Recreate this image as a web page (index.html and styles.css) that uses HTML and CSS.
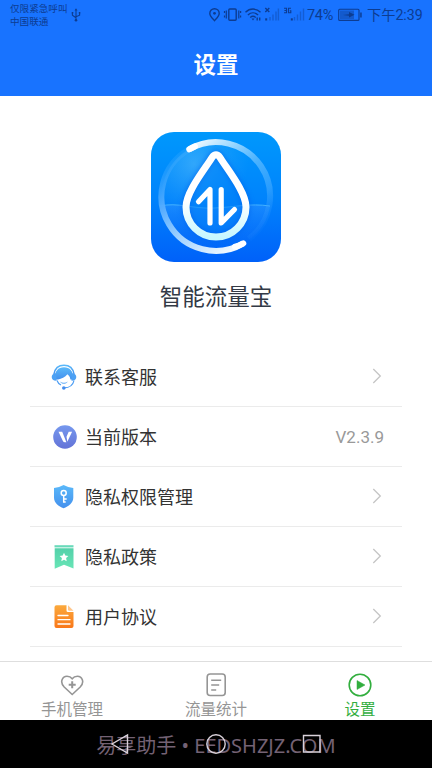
FILE: index.html
```html
<!DOCTYPE html>
<html lang="zh-CN">
<head>
<meta charset="utf-8">
<title>设置</title>
<link rel="stylesheet" href="styles.css">
</head>
<body>
<div class="screen">
  <header class="header">
    <div class="status">
      <div class="carrier"><span>仅限紧急呼叫</span><span>中国联通</span></div>
      <svg class="usb" width="10" height="14" viewBox="0 0 10 14" fill="none" stroke="currentColor" stroke-width="1.1"><path d="M5 2v10M1.4 5v2.2L5 9.7M8.6 4.8v2.4L5 8.8"/><path d="M3.5 2.5 5 .3l1.5 2.2zM.7 4h1.6v1.5H.7zM7.8 4h1.5v1.5H7.8z" fill="currentColor" stroke="none"/><circle cx="5" cy="12.3" r="1.3" fill="currentColor" stroke="none"/></svg>
      <svg class="status-icons" width="98" height="18" viewBox="208 6 98 18" fill="none" stroke="currentColor" stroke-width="1.4">
        <path d="M214.5 20.6c-1.2-1.6-4.7-4.2-4.7-7.2a4.7 4.7 0 0 1 9.4 0c0 3-3.5 5.6-4.7 7.2z"/><circle cx="214.5" cy="13.3" r="1.4" fill="currentColor" stroke="none"/>
        <rect x="228.8" y="9" width="7.4" height="11.3" rx="1"/><path d="M226.3 10.5v8M238.8 10.5v8M224.5 11v2M224.5 15.5v2M240.6 11v2M240.6 15.5v2" stroke-width="1.2"/>
        <path d="M245.5 12.2c4.4-4.2 10.6-4.2 15 0M247.9 15c3-2.8 7.2-2.8 10.2 0M250.2 17.5c1.7-1.5 3.9-1.5 5.6 0"/><path d="M251.5 18.6h3L253 20.5zM256.5 17.5h1.4v3h-1.4zM259 17.5h1.4v3H259z" fill="currentColor" stroke="none"/>
        <path d="m265.3 8 4 4m0-4-4 4"/><path d="M266.2 18.3v2.2" stroke-width="2"/>
        <path d="M270 17v3.5M273 14.5v6M276 11.5v9M278.4 8.5v12M294.5 17v3.5M297.5 14.5v6M300.5 11.5v9M303.5 8.5v12" opacity=".4"/><path d="M291.8 18.3v2.2" stroke-width="2"/>
        <path d="M284 8.3h2.5v4.4H284m.4-2.2h2M291 8.3h-2.5v4.4h2.3v-2h-1" stroke-width="1.1"/>
      </svg>
      <span class="percent">74%</span>
      <svg class="battery" width="24" height="14" viewBox="0 0 24 14"><rect x=".7" y="1.2" width="20.3" height="11.2" rx="1" fill="none" stroke="currentColor" stroke-width="1.1"/><path d="M2 2.5h14v8.6H2z" fill="currentColor" opacity=".45"/><path d="m5 7 6-.8V4l5.5 2.7L11 9.4V7.7z" fill="currentColor"/><path d="M22.2 4.5h1.5v5h-1.5z" fill="currentColor"/></svg>
      <span class="time">下午2:39</span>
    </div>
    <h1 class="title">设置</h1>
  </header>
  <main class="content">
    <svg class="logo" viewBox="0 0 130 130">
      <defs>
        <linearGradient id="bg" x2="0" y2="1"><stop stop-color="#0098fc"/><stop offset=".5" stop-color="#0084fc"/><stop offset="1" stop-color="#0061f9"/></linearGradient>
        <linearGradient id="arcR" gradientUnits="userSpaceOnUse" x1="38" y1="10" x2="112" y2="100"><stop stop-color="#fff"/><stop offset=".25" stop-color="#9cd8ff"/><stop offset=".5" stop-color="#5ab9ff" stop-opacity=".8"/><stop offset=".75" stop-color="#4aaeff" stop-opacity=".55"/><stop offset="1" stop-color="#2591ff" stop-opacity=".05"/></linearGradient>
        <linearGradient id="arcL" gradientUnits="userSpaceOnUse" x1="92" y1="118" x2="20" y2="25"><stop stop-color="#fff"/><stop offset=".4" stop-color="#a5d4ff"/><stop offset=".7" stop-color="#55acff"/><stop offset="1" stop-color="#42adff" stop-opacity=".2"/></linearGradient>
        <radialGradient id="sheen" cx=".3" cy=".2" r=".5"><stop stop-color="#62bffa" stop-opacity=".5"/><stop offset="1" stop-color="#42adfc" stop-opacity="0"/></radialGradient>
        <linearGradient id="drop" x2="0" y2="1"><stop stop-color="#fff"/><stop offset=".55" stop-color="#fff"/><stop offset="1" stop-color="#c7f7ff"/></linearGradient>
        <linearGradient id="water" x2="0" y2="1"><stop stop-color="#248fff" stop-opacity=".65"/><stop offset="1" stop-color="#0865f8" stop-opacity=".2"/></linearGradient>
        <filter id="glow" x="-20%" y="-20%" width="140%" height="140%"><feGaussianBlur stdDeviation="2"/></filter>
      </defs>
      <rect width="130" height="130" rx="23" fill="url(#bg)"/>
      <circle cx="64.7" cy="64.2" r="54" fill="url(#sheen)"/>
      <path d="M9 74c18-4 32 3 54 2 23-1 35-5 56-2-4 25-25 44-54 44S13 100 9 74z" fill="url(#water)"/>
      <path d="M9 74c18-4 32 3 54 2 23-1 35-5 56-2" fill="none" stroke="#50bdff" stroke-width=".8"/>
      <path d="M38.3 17.3A54 54 0 0 1 98 107" fill="none" stroke="url(#arcR)" stroke-width="6"/>
      <path d="M92.3 111.3A54 54 0 0 1 37 18" fill="none" stroke="url(#arcL)" stroke-width="6"/>
      <path d="M38.3 17.3Q41 15.6 44 14.4M92.3 111.3Q88 114 84 114.8" fill="none" stroke="#fff" stroke-width="6" stroke-linecap="round"/>
      <path d="M61 25.500Q65 20 69 25.500C76 37 95 60 95 75a30 30 0 0 1-60 0C35 60 54 37 61 25.500z" fill="#0482fa" stroke="#0564ee" stroke-width="10" filter="url(#glow)" opacity=".5"/>
      <path d="M61 25.500Q65 20 69 25.500C76 37 95 60 95 75a30 30 0 0 1-60 0C35 60 54 37 61 25.500z" fill="none" stroke="url(#drop)" stroke-width="7"/>
      <path d="M47.500 69.700 59 57.500V91M70.200 57.500V91L83.500 77.500" fill="none" stroke="#fff" stroke-width="5.200" stroke-linecap="round" stroke-linejoin="round"/>
    </svg>
    <p class="app-name">智能流量宝</p>
    <ul class="list">
      <li class="row">
        <svg class="icon" viewBox="0 0 26 26"><defs><linearGradient id="blue" x2="0" y2="1"><stop stop-color="#5ab9fa"/><stop offset="1" stop-color="#4490ed"/></linearGradient></defs><path d="M3 10C4 4 8 1.200 13 1.200S22 4 23 10" fill="none" stroke="url(#blue)" stroke-width="1.500"/><path d="M4.200 15.500C3 7 7.500 3.300 13 3.300s10 3.700 8.800 12.200l-2.400-.1c-.5-2.600-1.500-4-3-5.100-2.300 3.200-6 4.200-9.300 5.200z" fill="url(#blue)"/><path d="M5.500 9.300v7.400c-3 .1-4.800-1.200-4.800-3.700 0-2.300 1.800-3.800 4.800-3.700zM20.500 9.300v7.400c3 .1 4.800-1.200 4.800-3.700 0-2.300-1.800-3.800-4.800-3.700z" fill="#4da1f4"/><path d="M6 16.500c.7 2 2 3.600 4 4.500M23 16.500c-1 4.700-5 7.300-10 7.400" fill="none" stroke="#4b9cf3" stroke-width="1.200"/><path d="M9 17.500c2.400 1.700 5.400 1.700 7.800 0-1.600 3-6.200 3.200-7.800 0z" fill="#65aef6"/><circle cx="12.800" cy="24" r="1.800" fill="#438ced"/></svg>
        <span class="label">联系客服</span><svg class="chevron" viewBox="0 0 10 16"><path d="m1.300 1 7 7-7 7"/></svg>
      </li>
      <li class="row">
        <svg class="icon" viewBox="0 0 26 26"><defs><linearGradient id="violet" x2="0" y2="1"><stop stop-color="#7598ee"/><stop offset="1" stop-color="#6473d7"/></linearGradient></defs><circle cx="14" cy="13" r="11.800" fill="url(#violet)"/><path d="M7.500 7.800h3.700l4.200 10.400h-1.600q-1.300 0-1.900-1.200zM15.500 12.800l2.200-5h3.400l-4.800 10z" fill="#fff"/></svg>
        <span class="label">当前版本</span><span class="version">V2.3.9</span>
      </li>
      <li class="row">
        <svg class="icon" viewBox="0 0 26 26"><path d="M12.600 1Q17 3.500 22.300 4v9.500c0 5.400-4.700 8.800-9.700 10.700C7.600 22.300 3 18.900 3 13.500V4q5.300-.5 9.600-3z" fill="url(#blue)"/><circle cx="12.700" cy="9" r="2.500" fill="none" stroke="#fff" stroke-width="1.500"/><path d="M12.700 11.500v7.200M12.700 15h3M12.700 18h2" fill="none" stroke="#fff" stroke-width="1.500"/></svg>
        <span class="label">隐私权限管理</span><svg class="chevron" viewBox="0 0 10 16"><path d="m1.300 1 7 7-7 7"/></svg>
      </li>
      <li class="row">
        <svg class="icon" viewBox="0 0 26 26"><defs><linearGradient id="green" x2="0" y2="1"><stop stop-color="#54d1aa"/><stop offset="1" stop-color="#68e5b6"/></linearGradient></defs><path d="M3.500 1.200h19v2.200h-19z" fill="#69daba"/><path d="M3.700 4.300h18.800v20.300L13 20.700l-9.300 4z" fill="url(#green)"/><path d="m13 8.800 1.300 2.800 3.100.4-2.300 2.100.6 3.100-2.700-1.500-2.700 1.500.6-3.100L8.600 12l3.100-.4z" fill="#fff"/></svg>
        <span class="label">隐私政策</span><svg class="chevron" viewBox="0 0 10 16"><path d="m1.300 1 7 7-7 7"/></svg>
      </li>
      <li class="row">
        <svg class="icon" viewBox="0 0 26 26"><defs><linearGradient id="orange" x2="0" y2="1"><stop stop-color="#fbaa3d"/><stop offset="1" stop-color="#f97719"/></linearGradient></defs><path d="M5.500 1.200h10v5.300q0 1.500 1.500 1.500h5.500v14q0 2-2 2h-15q-2 0-2-2V3.200q0-2 2-2z" fill="url(#orange)"/><path d="m17 1.200 5.500 5.600h-4.300q-1.200 0-1.200-1.200z" fill="#ffc68b"/><path d="M7 11.500h10M7 15.700h12M7 20h12" stroke="#fff" stroke-width="1.300" stroke-linecap="round"/></svg>
        <span class="label">用户协议</span><svg class="chevron" viewBox="0 0 10 16"><path d="m1.300 1 7 7-7 7"/></svg>
      </li>
    </ul>
  </main>
  <nav class="tabs">
    <div class="tab"><svg viewBox="0 0 24 24"><path d="M12.200 21.500 4.200 14C-.7 8.900 2.500 3.200 7 3.200c2.300 0 4 .9 5.200 2.500 1.200-1.600 2.900-2.500 5.200-2.500 4.500 0 7.700 5.700 2.800 10.800z"/><path d="M12.200 8.300v7M8.700 11.800h7" stroke-width="2"/></svg><span>手机管理</span></div>
    <div class="tab"><svg viewBox="0 0 24 24"><rect x="3.200" y="1" width="18" height="21.500" rx="3"/><path d="M7.200 7.200h10M7.200 12h8M7.200 17h5"/></svg><span>流量统计</span></div>
    <div class="tab active"><svg viewBox="0 0 24 24"><circle cx="12" cy="12" r="10.800"/><path d="M9 7.500v9l8-4.500z" fill="currentColor" stroke-width=".5"/></svg><span>设置</span></div>
  </nav>
  <footer class="system">
    <p class="watermark">易享助手 • EEDSHZJZ.COM</p>
    <svg class="nav-icons" viewBox="0 0 432 48"><path d="M127.500 15v18L112 24zM303.500 15.500h16.500v16.500h-16.500z"/><circle cx="216" cy="24" r="9.200"/></svg>
  </footer>
</div>
</body>
</html>
```

FILE: styles.css
```css
* { box-sizing: border-box; }

body {
  margin: 0;
  background: #fff;
  font-family: Roboto, "Noto Sans CJK SC", sans-serif;
}

.screen {
  width: 432px;
  height: 768px;
  display: flex;
  flex-direction: column;
  overflow: hidden;
}

svg { display: block; flex: none; }

.header { height: 96px; background: #1873ff; }

.status {
  height: 30px;
  padding: 0 9px 0 10px;
  display: flex;
  align-items: center;
  color: #0d3c91;
  white-space: nowrap;
}

.carrier {
  display: flex;
  flex-direction: column;
  width: 58px;
  font-size: 9.6px;
  line-height: 13px;
}

.usb { margin-left: 3px; }
.status-icons { margin-left: 127px; }
.percent { margin-left: 1px; width: 30px; font-size: 14.5px; letter-spacing: -.3px; }
.battery { margin-left: 1px; }
.time { margin-left: 5px; font-size: 14.2px; line-height: 18px; padding-bottom: 1px; }

.title {
  margin: 0;
  height: 66px;
  color: #fff;
  font-size: 22.5px;
  line-height: 70px;
  font-weight: 700;
  text-align: center;
}

.content {
  height: 565px;
  display: flex;
  flex-direction: column;
  align-items: center;
  padding-top: 36px;
}

.logo { width: 130px; height: 130px; }

.app-name {
  margin: 18px 0 33px;
  font-size: 22.5px;
  line-height: 34px;
  color: #333a46;
}

.list {
  margin: 0;
  padding: 0;
  width: 372px;
  list-style: none;
}

.row {
  height: 60px;
  display: flex;
  align-items: center;
  padding: 0 18px 0 21px;
  border-bottom: 1px solid #ebebeb;
}

.icon { width: 26px; height: 26px; }

.label {
  flex: 1;
  margin-left: 8px;
  padding-top: 2px;
  font-size: 18px;
  line-height: 28px;
  color: #333;
}

.chevron {
  width: 10px;
  height: 16px;
  margin: 0 2.5px .5px 0;
  fill: none;
  stroke: #c5c5c5;
  stroke-width: 1.3;
}

.version { font-size: 17px; color: #999; }

.tabs {
  height: 59px;
  display: flex;
  border-top: 1px solid #dedede;
  background: #fff;
}

.tab {
  flex: 1;
  display: flex;
  flex-direction: column;
  align-items: center;
  padding-top: 11px;
  color: #959595;
  font-size: 15.5px;
  line-height: 26px;
}

.tab svg {
  width: 24px;
  height: 24px;
  fill: none;
  stroke: currentColor;
  stroke-width: 1.6;
}

.tab.active { color: #32ae3e; }

.system {
  position: relative;
  height: 48px;
  background: #000;
}

.watermark {
  margin: 0;
  padding-top: 12px;
  text-align: center;
  color: #746274;
  font-family: "Noto Sans", "Noto Sans CJK SC", sans-serif;
  font-size: 20px;
  line-height: 28px;
  white-space: nowrap;
}

.nav-icons {
  position: absolute;
  inset: 0;
  width: 432px;
  height: 48px;
  fill: none;
  stroke: #d9d1d9;
  stroke-width: 1.4;
}
```
